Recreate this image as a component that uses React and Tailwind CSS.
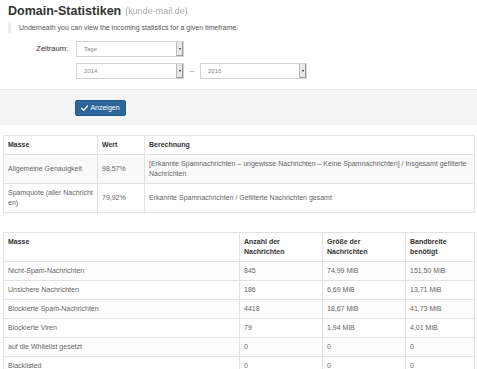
import React from "react";

function Select({ value, w }) {
  return (
    <div className={`flex h-[16px] items-stretch border border-[#d4d4d4] bg-white ${w}`}>
      <div className="flex-1 pl-[7px] text-[6px] leading-[14px] text-[#888]">{value}</div>
      <div className="flex w-[7px] items-center justify-center border-l border-[#bbb] bg-[#e8e8e8] shadow-[inset_-1px_-1px_0_#999]">
        <div className="h-0 w-0 border-x-[1.5px] border-t-[2px] border-x-transparent border-t-[#222]" />
      </div>
    </div>
  );
}

const th = "border border-[#e2e2e2] px-[4px] py-[4px] text-left align-top font-bold text-[#333]";
const td = "border border-[#e2e2e2] px-[4px] py-[4px] align-middle text-[#666]";

export default function App() {
  const rows = [
    ["Nicht-Spam-Nachrichten", "845", "74,99 MiB", "151,50 MiB"],
    ["Unsichere Nachrichten", "186", "6,69 MiB", "13,71 MiB"],
    ["Blockierte Spam-Nachrichten", "4418", "18,67 MiB", "41,73 MiB"],
    ["Blockierte Viren", "79", "1,94 MiB", "4,01 MiB"],
    ["auf die Whitelist gesetzt", "0", "0", "0"],
    ["Blacklisted", "0", "0", "0"],
  ];
  return (
    <div className="h-[369px] w-[477px] overflow-hidden bg-white font-['Liberation_Sans',Arial,sans-serif] text-[7px] leading-[10px] text-[#666]">
      <div className="flex h-[21px] items-center pl-[8px] pt-[1px]">
        <span className="text-[12.5px] font-bold leading-[18px] text-[#333]">Domain-Statistiken</span>
        <span className="ml-[4px] text-[9px] text-[#aaa] blur-[0.6px]">(kunde-mail.de)</span>
      </div>
      <div className="ml-[8px] mt-[1px] flex h-[11px] items-center border-l-[3px] border-[#eee] pl-[8px] text-[7px] text-[#555]">
        Underneath you can view the incoming statistics for a given timeframe.
      </div>
      <div className="mt-[8px] flex items-center">
        <div className="w-[69px] pr-[1px] text-right text-[7.5px] text-[#333]">Zeitraum:</div>
        <div className="ml-[7px]">
          <Select value="Tage" w="w-[108px]" />
        </div>
      </div>
      <div className="mt-[6px] flex items-center pl-[76px]">
        <Select value="2014" w="w-[108px]" />
        <div className="mx-[5px] w-[6px] text-center text-[#777]">–</div>
        <Select value="2016" w="w-[107px]" />
      </div>
      <div className="mt-[10px] flex h-[36px] items-center border-t border-[#e6e6e6] bg-[#f5f5f5] pl-[75px]">
        <div className="flex h-[16px] w-[51px] items-center justify-center gap-[2px] rounded-[2px] border border-[#265a88] bg-[#2c6699] text-[7px] text-white">
          <svg width="7" height="6" viewBox="0 0 16 13">
            <path d="M1 7 L6 12 L15 2" stroke="white" strokeWidth="3.2" fill="none" strokeLinecap="round" strokeLinejoin="round" />
          </svg>
          <span>Anzeigen</span>
        </div>
      </div>
      <div className="mt-[10px] px-[3px]">
        <table className="w-[472px] table-fixed border-collapse border border-[#e2e2e2]">
          <colgroup>
            <col className="w-[94px]" />
            <col className="w-[47px]" />
            <col />
          </colgroup>
          <thead>
            <tr>
              <th className={th}>Masse</th>
              <th className={th}>Wert</th>
              <th className={th}>Berechnung</th>
            </tr>
          </thead>
          <tbody>
            <tr className="bg-[#f9f9f9]">
              <td className={td}>Allgemeine Genauigkeit</td>
              <td className={td}>98,57%</td>
              <td className={td}>[Erkannte Spamnachrichten – ungewisse Nachrichten – Keine Spamnachrichten] / Insgesamt gefilterte Nachrichten</td>
            </tr>
            <tr>
              <td className={`${td} whitespace-nowrap`}>Spamquote (aller Nachricht<br />en)</td>
              <td className={td}>79,92%</td>
              <td className={td}>Erkannte Spamnachrichten / Gefilterte Nachrichten gesamt</td>
            </tr>
          </tbody>
        </table>
      </div>
      <div className="mt-[19px] px-[3px]">
        <table className="w-[472px] table-fixed border-collapse border border-[#e2e2e2]">
          <colgroup>
            <col className="w-[236px]" />
            <col className="w-[83px]" />
            <col className="w-[83px]" />
            <col />
          </colgroup>
          <thead>
            <tr>
              <th className={`${th} align-middle`}>Masse</th>
              <th className={th}>Anzahl der<br />Nachrichten</th>
              <th className={th}>Größe der<br />Nachrichten</th>
              <th className={th}>Bandbreite<br />benötigt</th>
            </tr>
          </thead>
          <tbody>
            {rows.map((r, i) => (
              <tr key={i} className={i % 2 === 0 ? "bg-[#fdfdfd]" : ""}>
                {r.map((c, j) => (
                  <td key={j} className={td}>{c}</td>
                ))}
              </tr>
            ))}
          </tbody>
        </table>
      </div>
    </div>
  );
}
